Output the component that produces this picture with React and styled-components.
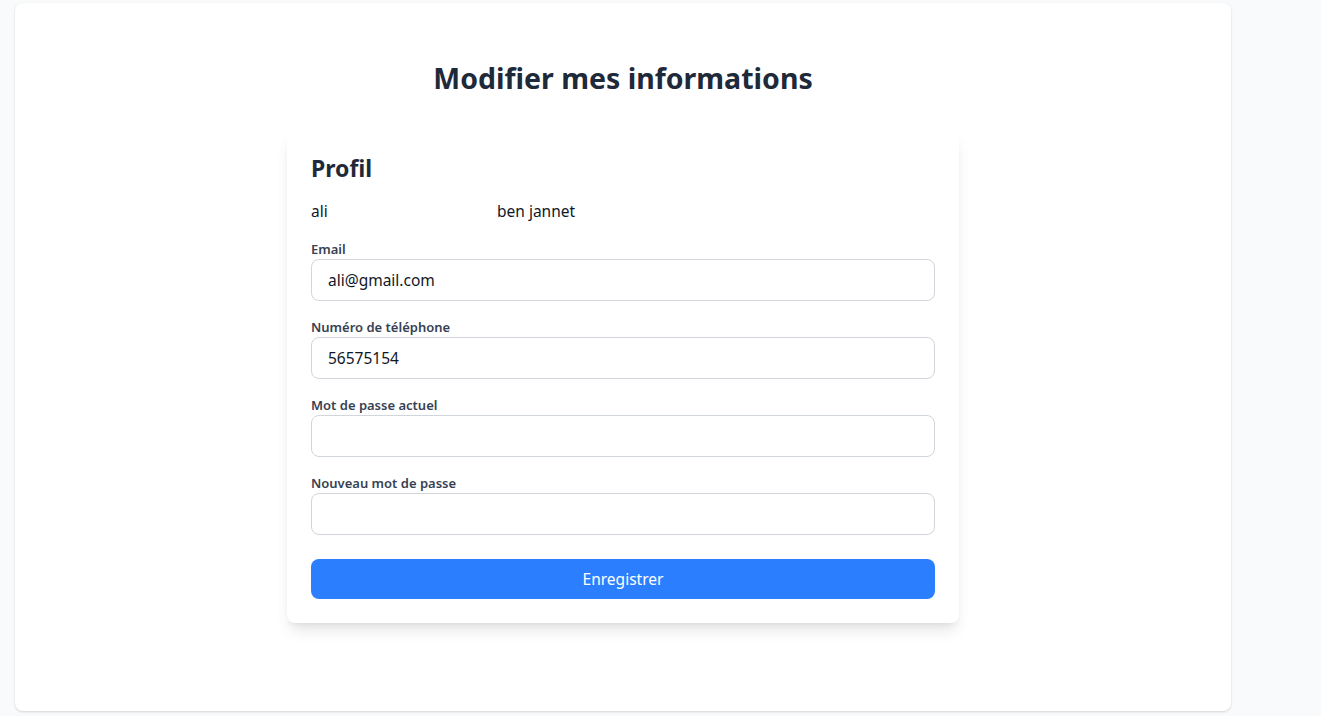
import React from "react";
import styled, { createGlobalStyle } from "styled-components";

const Global = createGlobalStyle`
  html, body { margin: 0; padding: 0; }
  body {
    background: #f9fafb;
    font-family: "Noto Sans", "Open Sans", sans-serif;
    color: #1e2939;
  }
  * { box-sizing: border-box; }
`;

const Page = styled.div`
  padding: 3px 0 5px 15px;
`;

const Shell = styled.main`
  width: 1216px;
  height: 708px;
  background: #ffffff;
  border-radius: 8px;
  box-shadow: 0 1px 3px rgba(0, 0, 0, 0.1), 0 1px 2px rgba(0, 0, 0, 0.06);
  padding-top: 57px;
  display: flex;
  flex-direction: column;
  align-items: center;
`;

const Title = styled.h1`
  margin: 0 0 35px;
  font-size: 28.5px;
  line-height: 36px;
  font-weight: 700;
  color: #1e2939;
`;

const Card = styled.section`
  width: 672px;
  background: #fff;
  border-radius: 8px;
  box-shadow: 0 10px 15px -3px rgba(0, 0, 0, 0.1), 0 4px 6px -4px rgba(0, 0, 0, 0.1);
  padding: 21px 24px 24px;
`;

const CardTitle = styled.h2`
  margin: 0 0 15px;
  font-size: 23px;
  line-height: 32px;
  font-weight: 700;
  color: #1e2939;
`;

const NameRow = styled.div`
  display: grid;
  grid-template-columns: 186px 1fr;
  font-size: 15.5px;
  line-height: 24px;
  color: #101828;
  margin-bottom: 16px;
`;

const Field = styled.div`
  display: flex;
  flex-direction: column;
  margin-bottom: ${(p) => (p.$last ? "24px" : "16px")};
`;

const Label = styled.label`
  font-size: 13px;
  line-height: 20px;
  font-weight: 600;
  color: #364153;
`;

const Input = styled.input`
  width: 100%;
  height: 42px;
  border: 1px solid #d1d5dc;
  border-radius: 8px;
  padding: 8px 16px;
  font-family: inherit;
  font-size: 15.5px;
  line-height: 24px;
  color: #101828;
  background: #fff;
  outline: none;
`;

const Button = styled.button`
  width: 100%;
  height: 40px;
  border: none;
  border-radius: 8px;
  background: #2b7fff;
  color: #fff;
  font-family: inherit;
  font-size: 15.5px;
  line-height: 24px;
  cursor: pointer;
`;

export default function App() {
  return (
    <>
      <Global />
      <Page>
        <Shell>
          <Title>Modifier mes informations</Title>
          <Card>
            <CardTitle>Profil</CardTitle>
            <NameRow>
              <span>ali</span>
              <span>ben jannet</span>
            </NameRow>
            <Field>
              <Label>Email</Label>
              <Input defaultValue="ali@gmail.com" />
            </Field>
            <Field>
              <Label>Numéro de téléphone</Label>
              <Input defaultValue="56575154" />
            </Field>
            <Field>
              <Label>Mot de passe actuel</Label>
              <Input type="password" />
            </Field>
            <Field $last>
              <Label>Nouveau mot de passe</Label>
              <Input type="password" />
            </Field>
            <Button>Enregistrer</Button>
          </Card>
        </Shell>
      </Page>
    </>
  );
}
